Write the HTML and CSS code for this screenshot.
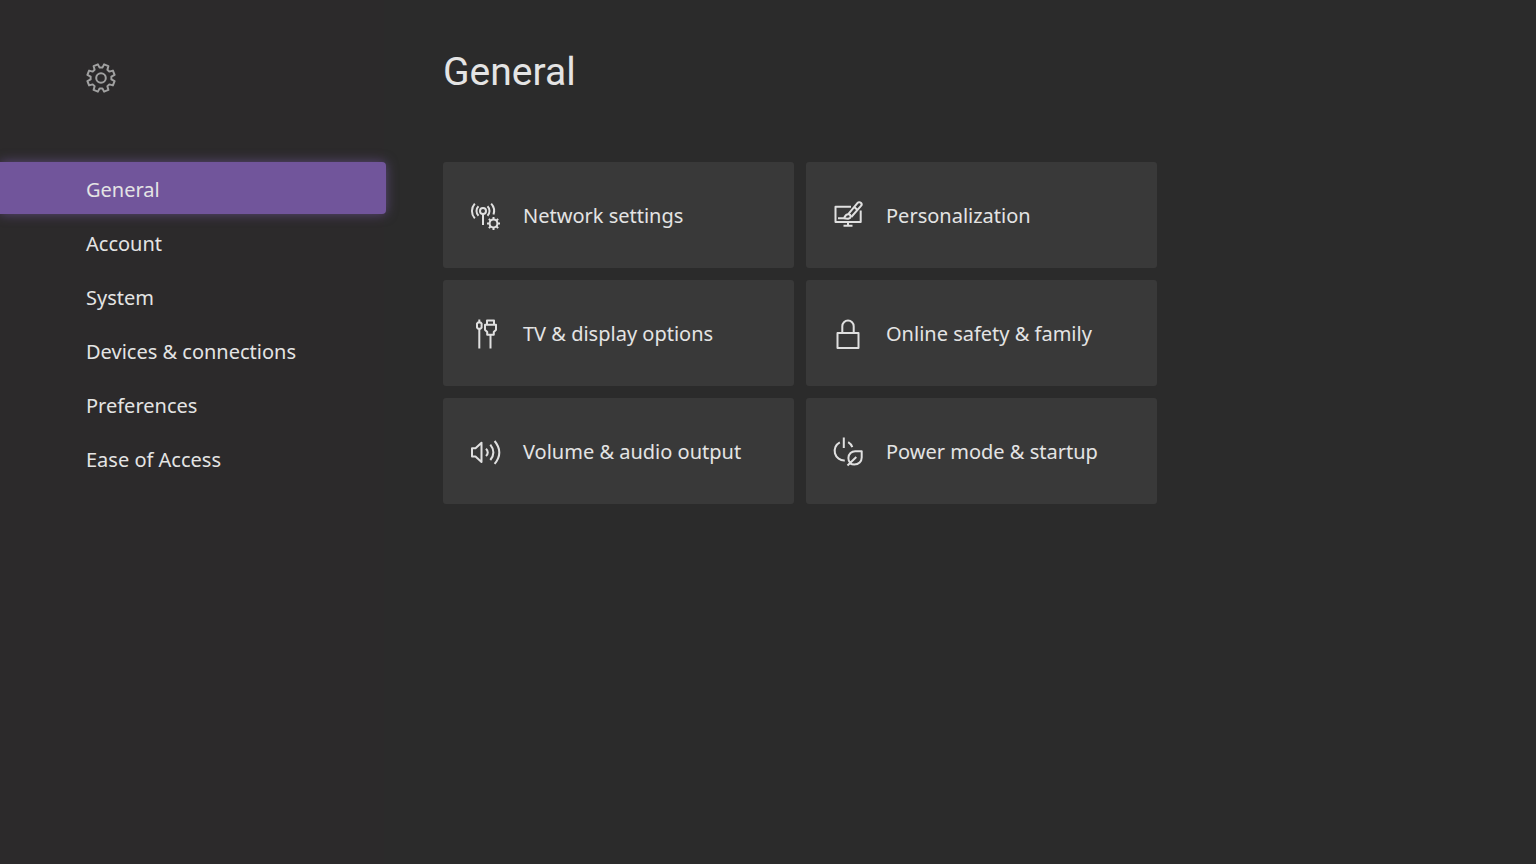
FILE: index.html
```html
<!DOCTYPE html>
<html lang="en">
<head>
    <meta charset="UTF-8">
    <meta name="viewport" content="width=device-width, initial-scale=1.0">
    <title>Settings - General</title>
    <link rel="stylesheet" href="styles.css">
</head>
<body>
    <div class="settings">
        <aside class="sidebar">
            <svg class="icon settings-icon" viewBox="-16 -16 32 32" aria-hidden="true">
                <path d="M10.4 1.4L13.6 3.1L11.9 7.4L8.3 6.4L6.4 8.3L7.4 11.9L3.1 13.6L1.4 10.4L-1.4 10.4L-3.1 13.6L-7.4 11.9L-6.4 8.3L-8.3 6.4L-11.9 7.4L-13.6 3.1L-10.4 1.4L-10.4 -1.4L-13.6 -3.1L-11.9 -7.4L-8.3 -6.4L-6.4 -8.3L-7.4 -11.9L-3.1 -13.6L-1.4 -10.4L1.4 -10.4L3.1 -13.6L7.4 -11.9L6.4 -8.3L8.3 -6.4L11.9 -7.4L13.6 -3.1L10.4 -1.4Z"/>
                <circle r="4.8"/>
            </svg>
            <nav class="menu" aria-label="Settings">
                <a class="menu-item active" href="#general" aria-current="page">General</a>
                <a class="menu-item" href="#account">Account</a>
                <a class="menu-item" href="#system">System</a>
                <a class="menu-item" href="#devices">Devices &amp; connections</a>
                <a class="menu-item" href="#preferences">Preferences</a>
                <a class="menu-item" href="#ease">Ease of Access</a>
            </nav>
        </aside>

        <main class="content">
            <h1>General</h1>
            <div class="cards">
                <button class="card" type="button">
                    <svg class="icon" viewBox="0 0 32 32" aria-hidden="true">
                        <circle cx="14" cy="11" r="3"/>
                        <path d="M14 14V25M9.5 6.3A6.5 6.5 0 0 0 9.5 15.7M18.5 6.3A6.5 6.5 0 0 1 18.5 15.7M5.8 3.6A11 11 0 0 0 5.8 18.4M22.2 3.6A11 11 0 0 1 24.5 14.5"/>
                        <circle cx="24.5" cy="23.5" r="3.9"/>
                        <path d="M24.5 19.6V17M24.5 27.4V30M20.6 23.5H18M28.4 23.5H31M21.7 20.7L19.9 18.9M27.3 20.7L29.1 18.9M21.7 26.3L19.9 28.1M27.3 26.3L29.1 28.1"/>
                    </svg>
                    <span>Network settings</span>
                </button>
                <button class="card" type="button">
                    <svg class="icon" viewBox="0 0 32 32" aria-hidden="true">
                        <path d="M19 6.7H3.5V22H28.7V10.5M16 22V25.5M11.5 25.7H20.5"/>
                        <path d="M16.3 14.2L25.6 2.9A2.2 2.2 0 0 1 29 5.9L19.3 17M22.4 7L25.4 10"/>
                        <path d="M6 18.2H11.5C13 18.2 12.7 14.2 16.2 14.2A2.4 2.4 0 0 1 18.6 16.5C18.6 18.6 16.5 19.2 11.5 18.2"/>
                    </svg>
                    <span>Personalization</span>
                </button>
                <button class="card" type="button">
                    <svg class="icon" viewBox="0 0 32 32" aria-hidden="true">
                        <path d="M10.3 1.5V4.5M9 4.5H11.6L12.6 5.7V9.5L11.6 10.7H9L8 9.5V5.7ZM10.3 11V30.5"/>
                        <path d="M18 6.8V2.5H25V6.8M16 6.8H27V11.8L24.8 14V16.8H18.2V14L16 11.8ZM21.5 16.8V30.5"/>
                    </svg>
                    <span>TV &amp; display options</span>
                </button>
                <button class="card" type="button">
                    <svg class="icon" viewBox="0 0 32 32" aria-hidden="true">
                        <path d="M5.5 15H26.5V30H5.5ZM10.3 15V8.3A5.7 5.7 0 0 1 21.7 8.3V15"/>
                    </svg>
                    <span>Online safety &amp; family</span>
                </button>
                <button class="card" type="button">
                    <svg class="icon" viewBox="0 0 32 32" aria-hidden="true">
                        <path d="M3 12.2H6.5L12.5 6.7V26L6.5 20.5H3Z"/>
                        <path d="M17 12.8Q20.5 16.4 17 20M21.3 8.7Q27.5 16.4 21.3 24M25.6 5Q35 16.4 25.6 27.8"/>
                    </svg>
                    <span>Volume &amp; audio output</span>
                </button>
                <button class="card" type="button">
                    <svg class="icon" viewBox="0 0 32 32" aria-hidden="true">
                        <path d="M11.8 1.5V12M7.8 6.3A9.6 9.6 0 0 0 12.8 24.4M16.2 6.2A9.6 9.6 0 0 1 20.3 11.2"/>
                        <path d="M29.7 15.2H23.5A6.8 6.8 0 0 0 16.4 22C16.4 26.4 19.2 28.6 22.3 28.6C26.7 28.6 29.7 25.5 29.7 21.5ZM15.5 29.5L24.3 21"/>
                    </svg>
                    <span>Power mode &amp; startup</span>
                </button>
            </div>
        </main>
    </div>
</body>
</html>
```

FILE: styles.css
```css
* {
    box-sizing: border-box;
}
body {
    margin: 0;
    background-color: #2b2b2b;
    color: #e4e4e4;
    font-family: "Noto Sans", "Open Sans", sans-serif;
    font-size: 20px;
    line-height: 28px;
}
.settings {
    display: flex;
    min-height: 100vh;
}
.sidebar {
    flex: 0 0 25%;
    padding-top: 62px;
    background-color: #2c2a2b;
}
.icon {
    display: block;
    flex: none;
    width: 32px;
    height: 32px;
    fill: none;
    stroke: #e0e0e0;
    stroke-width: 2;
    stroke-linejoin: round;
}
.settings-icon {
    margin-left: 85px;
    stroke: #a0a0a0;
}
.menu {
    display: flex;
    flex-direction: column;
    gap: 2px;
    margin-top: 68px;
    margin-right: -2px;
}
.menu-item {
    padding: 14px 16px 10px 86px;
    border-radius: 0 4px 4px 0;
    color: inherit;
    text-decoration: none;
}
.menu-item.active {
    background-color: #71559b;
    box-shadow: 0 0 12px rgba(113, 85, 155, 0.7);
}
.content {
    flex: 1;
    padding: 48px 24px 48px 59px;
}
h1 {
    margin: 0 0 66px;
    font-family: Roboto, sans-serif;
    font-size: 39px;
    font-weight: 400;
    line-height: 48px;
}
.cards {
    display: grid;
    grid-template-columns: 1fr 1fr;
    gap: 12px;
    max-width: 714px;
}
.card {
    display: flex;
    align-items: center;
    gap: 22px;
    min-height: 106px;
    padding: 24px 24px 22px 26px;
    border: none;
    border-radius: 3px;
    background-color: #393939;
    color: inherit;
    font: inherit;
    text-align: left;
    cursor: pointer;
}
.card:hover {
    background-color: #444;
}
```
